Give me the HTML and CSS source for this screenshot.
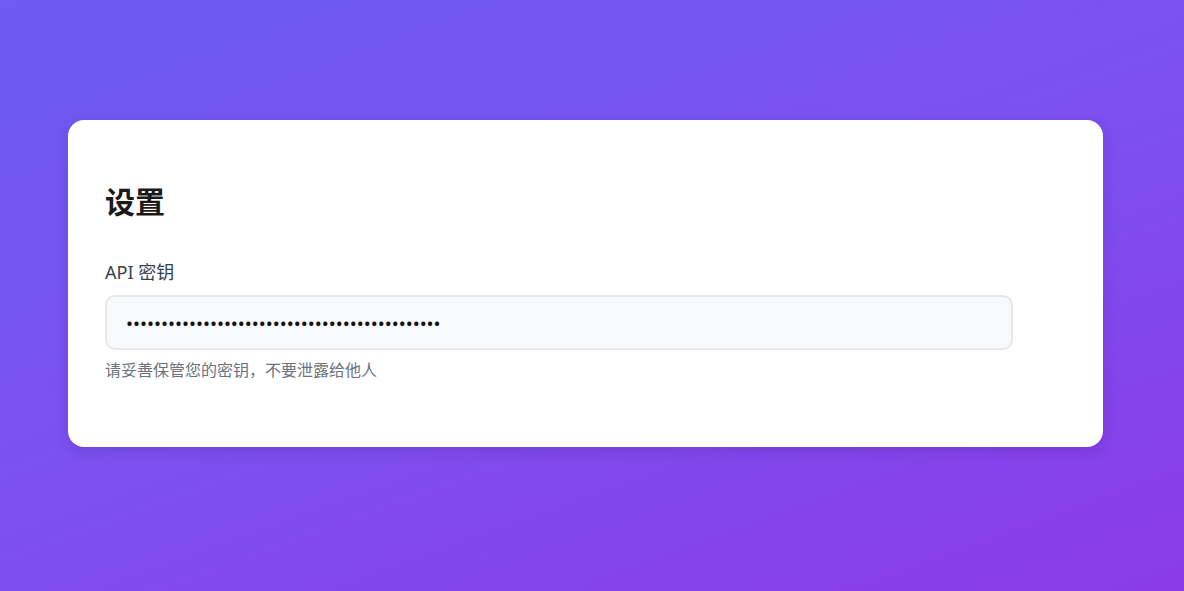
FILE: index.html
```html
<!DOCTYPE html>
<html lang="zh">
<head>
<meta charset="utf-8">
<link rel="stylesheet" href="styles.css">
</head>
<body>
<main class="page">
  <section class="card">
    <h1 class="title">设置</h1>
    <label class="label" for="key">API 密钥</label>
    <input class="input" id="key" type="password" value="sk-abcdefghijklmnopqrstuvwxyz0123456789ABCDEF" readonly>
    <p class="hint">请妥善保管您的密钥，不要泄露给他人</p>
  </section>
</main>
</body>
</html>
```
FILE: styles.css
```css
html, body {
  margin: 0;
  height: 100%;
}
body {
  background: linear-gradient(160deg, #6c5cf0 0%, #7b52f0 45%, #8b3be8 100%);
  font-family: "Noto Sans", "Noto Sans CJK SC", sans-serif;
  overflow: hidden;
}
.page {
  padding: 120px 0 0 68px;
}
.card {
  box-sizing: border-box;
  width: 1035px;
  height: 327px;
  background: #ffffff;
  border-radius: 16px;
  box-shadow: 0 4px 14px rgba(40, 10, 90, 0.15);
  padding: 62px 37px 0 37px;
  display: flex;
  flex-direction: column;
}
.title {
  margin: 0;
  font-size: 30px;
  line-height: 40px;
  font-weight: 700;
  color: #1a1a1a;
}
.label {
  margin-top: 37px;
  font-size: 18px;
  line-height: 26px;
  color: #374151;
}
.input {
  box-sizing: border-box;
  margin-top: 10px;
  width: 908px;
  height: 55px;
  padding: 0 19px;
  border: 2px solid #e5e7eb;
  border-radius: 10px;
  background: #f8f9fb;
  font-family: "Noto Sans", sans-serif;
  font-size: 18.6px;
  color: #111111;
  outline: none;
}
.hint {
  margin: 9px 0 0;
  font-size: 16px;
  line-height: 22px;
  color: #6b7280;
}
```
